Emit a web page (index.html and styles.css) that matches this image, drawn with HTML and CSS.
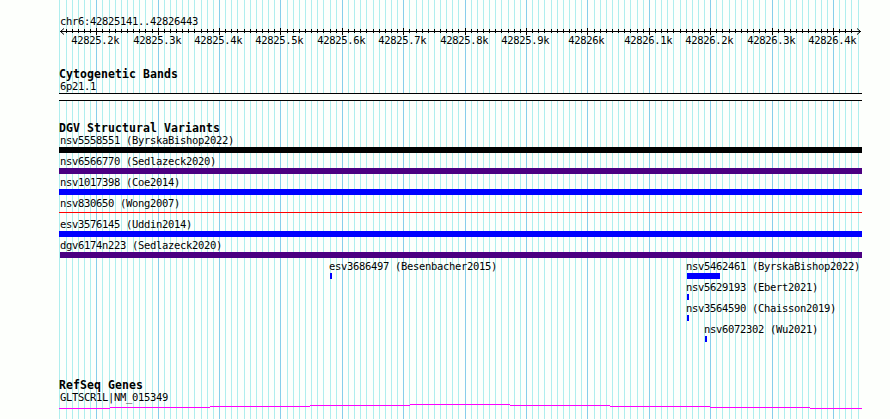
FILE: index.html
```
<!DOCTYPE html>
<html lang="en">
<head>
<meta charset="utf-8">
<title>chr6:42825141..42826443</title>
<link rel="stylesheet" href="styles.css">
</head>
<body>
<main class="panel">
  <svg class="grid" id="grid" width="803" height="419" shape-rendering="crispEdges"></svg>
  <div class="region">chr6:42825141..42826443</div>
  <svg class="axis" id="axis" width="803" height="22"></svg>

  <section class="track cyto">
    <h2>Cytogenetic Bands</h2>
    <div class="label">6p21.1</div>
    <div class="band"></div>
  </section>

  <section class="track variants">
    <h2>DGV Structural Variants</h2>
    <div class="row"><div class="label">nsv5558551 (ByrskaBishop2022)</div><div class="bar black"></div></div>
    <div class="row"><div class="label">nsv6566770 (Sedlazeck2020)</div><div class="bar purple"></div></div>
    <div class="row"><div class="label">nsv1017398 (Coe2014)</div><div class="bar"></div></div>
    <div class="row"><div class="label">nsv830650 (Wong2007)</div><div class="bar thin"></div></div>
    <div class="row"><div class="label">esv3576145 (Uddin2014)</div><div class="bar"></div></div>
    <div class="row"><div class="label">dgv6174n223 (Sedlazeck2020)</div><div class="bar purple inset"></div></div>
    <div class="row pair">
      <div class="feature mid"><div class="label">esv3686497 (Besenbacher2015)</div><div class="bar small"></div></div>
      <div class="feature"><div class="label">nsv5462461 (ByrskaBishop2022)</div><div class="bar medium"></div></div>
    </div>
    <div class="row late"><div class="label">nsv5629193 (Ebert2021)</div><div class="bar small"></div></div>
    <div class="row late"><div class="label">nsv3564590 (Chaisson2019)</div><div class="bar small"></div></div>
    <div class="row later"><div class="label">nsv6072302 (Wu2021)</div><div class="bar small"></div></div>
  </section>

  <section class="track genes">
    <h2>RefSeq Genes</h2>
    <div class="label">GLTSCR1L|NM_015349</div>
    <svg class="gene" width="803" height="6" shape-rendering="crispEdges">
      <path fill="#f0f" d="M0 5h51v1H0zM51 4h100v1H51zM151 3h100v1H151zM251 2h100v1H251zM351 1h100v1H351zM451 2h100v1H451zM551 3h100v1H551zM651 4h100v1H651zM751 5h52v1H751z"/>
    </svg>
  </section>
</main>
<script src="ruler.js"></script>
</body>
</html>
```
FILE: styles.css
```
body {
  margin: 0;
  background: #fdfffc;
  overflow: hidden;
}
.panel {
  position: relative;
  isolation: isolate;
  box-sizing: border-box;
  width: 803px;
  height: 419px;
  margin-left: 59px;
  padding-top: 15px;
  color: #000;
  font: 10.5px/12px "DejaVu Sans Mono", monospace;
  letter-spacing: -0.321px;
  white-space: nowrap;
}
.grid {
  position: absolute;
  top: 0;
  left: 0;
  z-index: -1;
}
svg {
  display: block;
}
.region,
.label {
  height: 12px;
  padding-left: 1px;
}
.axis {
  overflow: visible;
}
h2 {
  height: 12px;
  margin: 0;
  font-size: 11.5px;
  font-weight: bold;
  line-height: 12px;
  letter-spacing: 0.076px;
}
.cyto {
  margin-top: 19px;
}
.band {
  box-sizing: border-box;
  height: 8px;
  margin-top: 1px;
  border: solid #000;
  border-width: 1px 0;
  background: #fdfffc;
}
.variants {
  margin-top: 21px;
}
.row {
  height: 21px;
}
.bar {
  height: 6px;
  margin-top: 1px;
  background: #00f;
}
.black {
  background: #000;
}
.purple {
  background: #4b0082;
}
.inset {
  margin-left: 1px;
}
.thin {
  height: 1px;
  margin-top: 3px;
  background: #f00;
}
.pair {
  display: flex;
  padding-left: 270px;
}
.mid {
  width: 357px;
}
.feature {
  flex: none;
}
.feature .label,
.late .label,
.later .label {
  padding-left: 0;
}
.feature .bar,
.late .bar,
.later .bar {
  margin-left: 1px;
}
.bar.small {
  width: 2px;
}
.bar.medium {
  width: 33px;
}
.late {
  padding-left: 627px;
}
.later {
  padding-left: 645px;
}
.genes {
  margin-top: 35px;
}
```
FILE: ruler.js
```
const NS = "http://www.w3.org/2000/svg";
const grid = document.getElementById("grid");
const axis = document.getElementById("axis");

function add(parent, name, attrs, text) {
  const el = document.createElementNS(NS, name);
  for (const key in attrs) el.setAttribute(key, attrs[key]);
  if (text) el.textContent = text;
  parent.appendChild(el);
}

function rect(parent, x, y, width, height, fill) {
  add(parent, "rect", { x, y, width, height, fill, "shape-rendering": "crispEdges" });
}

// One grid line per 10 bases, a labelled one per 100.
const step = 8000 / 1303;
rect(axis, 1, 4, 801, 1, "#000");
for (let i = -6; i <= 124; i++) {
  const x = Math.floor(37.75 + i * step);
  const major = i % 10 === 0;
  rect(grid, x, 0, 1, 419, major ? "#87ceeb" : "#afeeee");
  if (i > -6 && i < 124) rect(axis, x, major ? 1 : 2, 1, major ? 7 : 4, "#000");
  if (major) {
    const value = (428252 + i / 10) / 10;
    add(axis, "text", { x: x - 0.7, y: 17, "text-anchor": "middle" }, value + "k");
  }
}
const arrow = { fill: "none", stroke: "#000", "stroke-width": 1 };
add(axis, "path", { ...arrow, d: "M5 1.5L1.5 4.5L5 7.5" });
add(axis, "path", { ...arrow, d: "M798 1.5L801.5 4.5L798 7.5" });
```
